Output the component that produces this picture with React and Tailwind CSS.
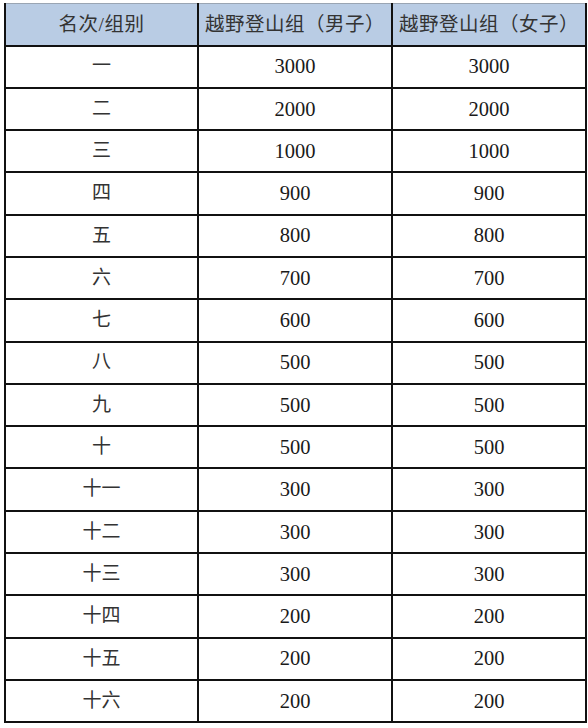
import React from 'react';

const rows = [
  ['一', '3000', '3000'],
  ['二', '2000', '2000'],
  ['三', '1000', '1000'],
  ['四', '900', '900'],
  ['五', '800', '800'],
  ['六', '700', '700'],
  ['七', '600', '600'],
  ['八', '500', '500'],
  ['九', '500', '500'],
  ['十', '500', '500'],
  ['十一', '300', '300'],
  ['十二', '300', '300'],
  ['十三', '300', '300'],
  ['十四', '200', '200'],
  ['十五', '200', '200'],
  ['十六', '200', '200'],
];

const headers = ['名次/组别', '越野登山组（男子）', '越野登山组（女子）'];

export default function App() {
  return (
    <div className="w-[588px] h-[728px] bg-white pt-[3px] pl-[4px] font-['Liberation_Serif','Noto_Sans_CJK_SC',serif] text-[#1a1a1a]">
      <table className="w-[581px] table-fixed border-collapse">
        <colgroup>
          <col className="w-[193px]" />
          <col className="w-[194px]" />
          <col className="w-[194px]" />
        </colgroup>
        <thead>
          <tr className="h-[42px] bg-[#b9cce4]">
            {headers.map((h) => (
              <th
                key={h}
                className="border-x-2 border-b-2 border-t border-x-[#111] border-b-[#111] border-t-[#9aa5b3] p-0 text-center text-[19.5px] font-normal text-[#333] tracking-[0.5px]"
              >
                {h}
              </th>
            ))}
          </tr>
        </thead>
        <tbody>
          {rows.map((r) => (
            <tr key={r[0]} className="h-[42.3px]">
              {r.map((c, i) => (
                <td
                  key={i}
                  className={`border-2 border-[#111] p-0 text-center ${
                    i === 0 ? 'text-[19px] text-[#333]' : 'text-[20.5px]'
                  }`}
                >
                  {c}
                </td>
              ))}
            </tr>
          ))}
        </tbody>
      </table>
    </div>
  );
}
